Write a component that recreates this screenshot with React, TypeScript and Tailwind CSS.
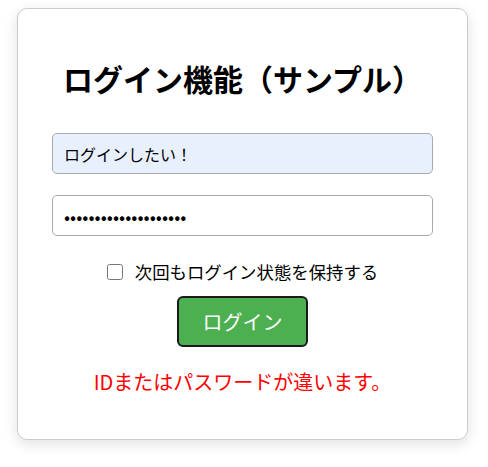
import { useState } from 'react'

const FONT = "font-['Noto_Sans_CJK_JP','Noto_Sans',sans-serif]"

export default function App() {
  const [id, setId] = useState('ログインしたい！')
  const [password, setPassword] = useState('aaaaaaaaaaaaaaaaaaaa')
  const [remember, setRemember] = useState(false)

  return (
    <div className={`min-h-[467px] bg-white pt-[8px] pl-[17px] ${FONT}`}>
      <div className="w-[451px] rounded-[10px] border border-[#cccccc] bg-white px-[34px] pt-[49px] pb-[45px] shadow-[0_4px_14px_rgba(0,0,0,0.12)]">
        {/* タイトル */}
        <h1 className="h-[40px] text-center text-[30px] leading-[40px] font-bold text-black">
          ログイン機能（サンプル）
        </h1>

        <form className="mt-[35px] flex flex-col" onSubmit={(e) => e.preventDefault()}>
          <input
            type="text"
            value={id}
            onChange={(e) => setId(e.target.value)}
            className="h-[41px] w-full rounded-[5px] border border-[#aaaaaa] bg-[#e8f0fe] px-[11px] text-[16px] text-black outline-none"
          />
          <input
            type="password"
            value={password}
            onChange={(e) => setPassword(e.target.value)}
            className="mt-[21px] h-[41px] w-full rounded-[5px] border border-[#aaaaaa] bg-white px-[11px] text-[18px] text-black outline-none"
          />

          {/* ログイン状態の保持 */}
          <label className="mt-[24px] flex h-[24px] items-center justify-center gap-[12px] text-[17.4px] text-black">
            <input
              type="checkbox"
              checked={remember}
              onChange={(e) => setRemember(e.target.checked)}
              className="h-[16px] w-[16px]"
            />
            <span>次回もログイン状態を保持する</span>
          </label>

          <div className="mt-[12px] flex justify-center">
            <button
              type="submit"
              className="h-[51px] w-[131px] rounded-[6px] border-2 border-[#1a1a1a] bg-[#4caf50] text-[20px] text-white"
            >
              ログイン
            </button>
          </div>

          <p className="mt-[23px] h-[24px] text-center text-[20px] leading-[24px] text-[#ff0000]">
            IDまたはパスワードが違います。
          </p>
        </form>
      </div>
    </div>
  )
}
